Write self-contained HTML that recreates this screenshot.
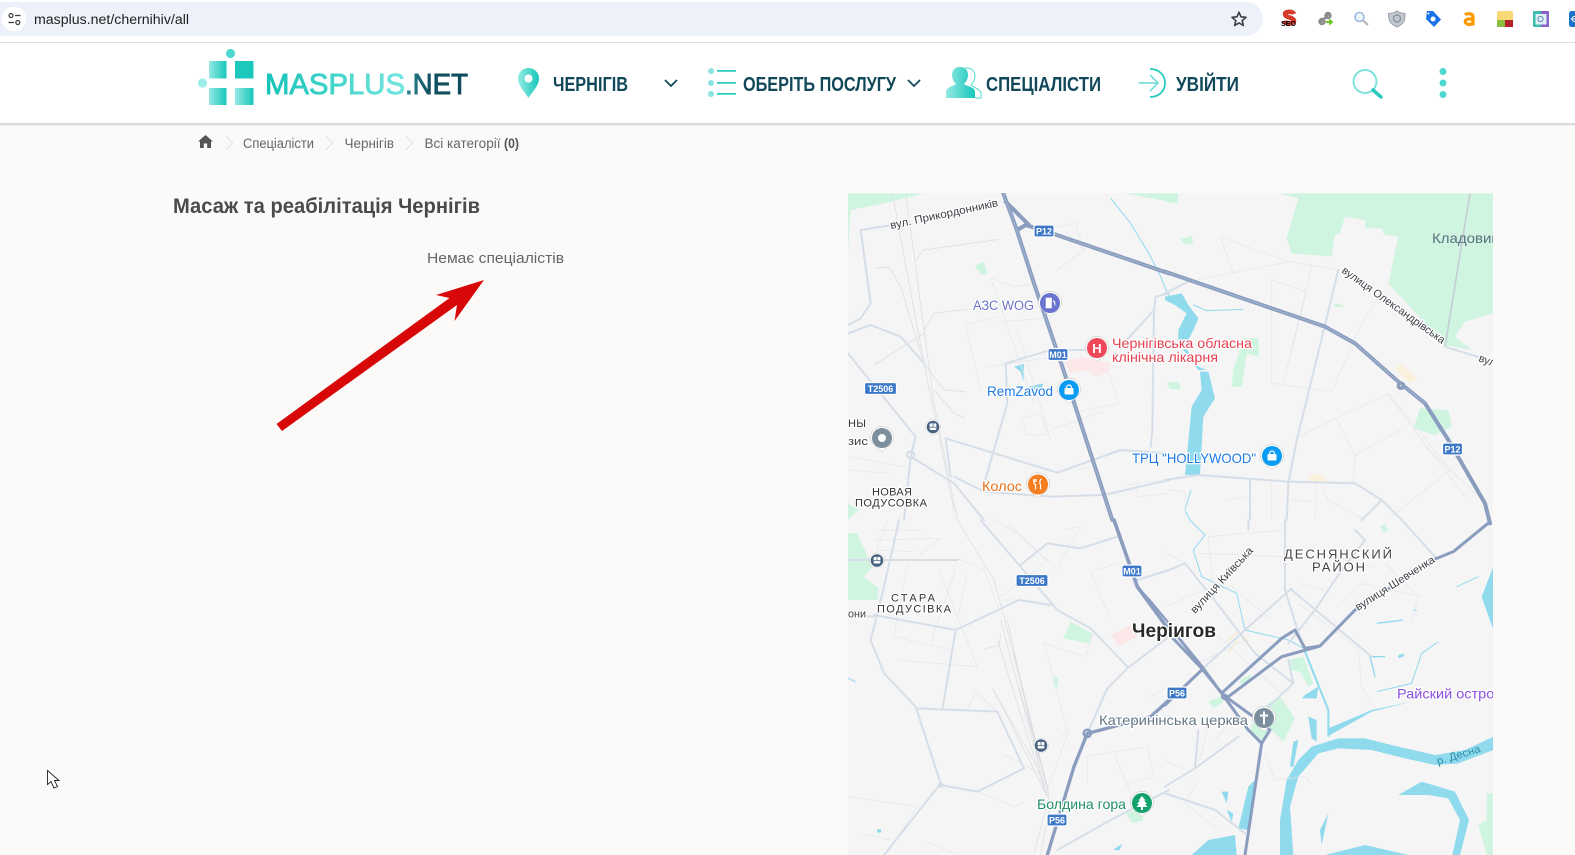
<!DOCTYPE html>
<html lang="uk"><head><meta charset="utf-8"><title>Масаж та реабілітація Чернігів</title>
<style>
html,body{margin:0;padding:0;width:1575px;height:855px;overflow:hidden;background:#fbfaf8}
svg{display:block;font-family:"Liberation Sans",sans-serif}
.h{fill:none;stroke:#8a9dbf;stroke-width:12;stroke-linejoin:round;stroke-linecap:round}
.hi{fill:none;stroke:#9fb0cc;stroke-width:3.500;stroke-linejoin:round}
.m{fill:none;stroke:#d6dee8;stroke-width:6;stroke-linejoin:round;stroke-linecap:round}
.t{fill:none;stroke:#e5e8ec;stroke-width:2.400;stroke-linejoin:round}
.r{fill:none;stroke:#dcdfe3;stroke-width:2.500}
.w{fill:#90daee}
.wl{fill:none;stroke:#90daee;stroke-width:3;stroke-linejoin:round}
.p{fill:#cff5e0}
.l{paint-order:stroke;stroke:#fff;stroke-width:2.500px;stroke-linejoin:round;font-size:14px}
.s{paint-order:stroke;stroke:#fff;stroke-width:2.500px;stroke-linejoin:round;font-size:11px;fill:#3a3f45}
.a{paint-order:stroke;stroke:#fff;stroke-width:2.500px;stroke-linejoin:round;font-size:11px;fill:#333;font-weight:bold}
.n{font-weight:bold;font-size:20px;fill:#12495a}
.sh{font-size:9px;font-weight:bold;fill:#fff;text-anchor:middle}
</style></head><body>
<svg width="1575" height="855" viewBox="0 0 1575 855" xmlns="http://www.w3.org/2000/svg">
<defs>
<linearGradient id="g" x1="0" x2="1" y1="0" y2="0"><stop offset="0" stop-color="#96eae4"/><stop offset="1" stop-color="#16c6ba"/></linearGradient>
<linearGradient id="tx" gradientUnits="userSpaceOnUse" x1="265" x2="405" y1="0" y2="0"><stop offset="0" stop-color="#16c3b8"/><stop offset="1" stop-color="#74e6df"/></linearGradient>
<linearGradient id="nt" gradientUnits="userSpaceOnUse" x1="405" x2="468" y1="0" y2="0"><stop offset="0" stop-color="#2f8a96"/><stop offset=".4" stop-color="#0f5160"/><stop offset="1" stop-color="#0f4c5c"/></linearGradient>
<clipPath id="mc"><rect x="848" y="193" width="645" height="662"/></clipPath>
<path id="pin" d="M-11.700,0A11.700,11.700 0 1 1 11.700,0C11.700,5 5,9 0,13.500C-5,9 -11.700,5 -11.700,0Z" fill="#fff" stroke="#bcbcbc" stroke-width=".5"/>
<g id="sh12"><rect x="-10" y="-6" width="20" height="12" rx="2" fill="#3d78c8" stroke="#fff" stroke-width="1.200"/></g>
<g id="sh32"><rect x="-16" y="-6" width="32" height="12" rx="2" fill="#3d78c8" stroke="#fff" stroke-width="1.200"/></g>
<g id="tr"><circle r="7.500" fill="#fff" stroke="#ccc" stroke-width=".5"/><circle r="6.300" fill="#47627e"/><rect x="-3.400" y="-3.600" width="6.800" height="6.600" rx="1.400" fill="#fff"/><rect x="-.4" y="-3.600" width=".8" height="3.400" fill="#47627e"/><rect x="-3.400" y="-.2" width="6.800" height=".8" fill="#47627e"/></g>
</defs>

<rect width="1575" height="855" fill="#fbfaf8"/>

<!-- browser chrome -->
<rect width="1575" height="42" fill="#fff"/>
<rect x="-20" y="2" width="1283" height="34" rx="17" fill="#edf1f9"/>
<circle cx="14" cy="19" r="12.300" fill="#fff"/>
<g fill="none" stroke="#3b3f45" stroke-width="1.200"><circle cx="11" cy="15.500" r="2"/><path d="M15 15.500h5.500M8.500 22.500H14"/><circle cx="17.800" cy="22.500" r="2"/></g>
<text x="34" y="24" font-size="13.500" fill="#1f1f1f" textLength="155" lengthAdjust="spacingAndGlyphs">masplus.net/chernihiv/all</text>
<path d="M1239 12.200l2 4.600 5 .5-3.800 3.300 1.100 4.900-4.300-2.600-4.300 2.600 1.100-4.900-3.800-3.300 5-.5z" fill="none" stroke="#3b3f45" stroke-width="1.600" stroke-linejoin="round"/>
<rect y="42" width="1575" height="1" fill="#e0e0e0"/>

<!-- extensions -->
<path d="M1294 14c-1-3-9-3-9 0 0 4 9 3 9 7 0 3-9 3-10 0" fill="none" stroke="#d63a2a" stroke-width="4.500"/>
<text x="1288.500" y="26" font-size="7" font-weight="bold" fill="#000" text-anchor="middle" textLength="15" lengthAdjust="spacingAndGlyphs">SEO</text>
<g fill="none" stroke="#8d8d8d" stroke-width="2.500"><path d="M1320 23l9-9"/><circle cx="1322" cy="21.500" r="2.500"/><circle cx="1328" cy="15.500" r="2.500"/></g><path d="M1326 21h3v-2.500l4.500 3.500-4.500 3.500V23h-3z" fill="#6cc326"/>
<circle cx="1359.500" cy="17" r="4.500" fill="#eef4fb" stroke="#9dbce0" stroke-width="1.600"/><path d="M1363 20.500l5 4.500" stroke="#b8b8b8" stroke-width="2.200"/>
<path d="M1388.500 13.500c3 0 6-1 8.500-2.500 2.500 1.500 5 2.500 8 2.500 0 6 0 10-8 13.500-8-3.500-8.500-7.500-8.500-13.500z" fill="#c3c8d0" stroke="#9aa0aa"/><circle cx="1397" cy="18.500" r="3.500" fill="none" stroke="#8e949e" stroke-width="1.500"/>
<path d="M1427 11h6l8 8.500-7 7.500-8-8z" fill="#1a73e8"/><circle cx="1433" cy="19" r="2.500" fill="#fff"/><circle cx="1428.500" cy="13.500" r="1" fill="#fff"/>
<path d="M1465 14.800c1.500-1.300 8-2.300 8 2.200v8.500M1473 19h-4c-5 0-5 5 0 5.500 2 0 4-1 4-3" fill="none" stroke="#ff9900" stroke-width="3.200"/>
<rect x="1497" y="11" width="16" height="16" rx="1.500" fill="#f9d976"/><rect x="1497" y="20" width="8" height="7" fill="#8bbf3f"/><rect x="1505" y="20" width="8" height="7" fill="#b3202a"/>
<rect x="1533" y="11" width="16" height="16" rx="1" fill="#3dbdb0"/><rect x="1541" y="11" width="8" height="16" fill="#8b62c9"/><rect x="1535.500" y="14" width="11" height="10.500" fill="#dff1f3"/><circle cx="1540.500" cy="19" r="2.600" fill="none" stroke="#5a88c0"/>
<rect x="1569" y="11" width="12" height="16" rx="2.500" fill="#1a73c8"/><path d="M1571 19h4" stroke="#fff"/><circle cx="1574.500" cy="19" r="2.500" fill="none" stroke="#fff"/>

<!-- site header -->
<rect y="43" width="1575" height="80" fill="#fff"/>
<rect y="123" width="1575" height="2" fill="#dcdcdc"/>
<rect y="125" width="1575" height="1" fill="#efeeec"/>
<circle cx="230.500" cy="53.500" r="4.600" fill="#4fd8d0"/>
<circle cx="202.500" cy="83" r="4.600" fill="#9ceee9"/>
<rect x="209" y="61" width="17.500" height="17.500" fill="url(#g)"/>
<rect x="235" y="61" width="18.500" height="17.500" fill="#1cc8bc"/>
<rect x="209" y="88" width="17.500" height="17" fill="url(#g)"/>
<rect x="235" y="88" width="18.500" height="17" fill="url(#g)"/>
<text x="265" y="94" font-size="29" fill="url(#tx)" textLength="140" lengthAdjust="spacingAndGlyphs" stroke="url(#tx)" stroke-width=".9">MASPLUS</text>
<text x="405" y="94" font-size="29" fill="url(#nt)" textLength="63" lengthAdjust="spacingAndGlyphs" stroke="url(#nt)" stroke-width=".9">.NET</text>

<path fill-rule="evenodd" d="M528.500 68c6 0 10.500 4.700 10.500 10.500 0 7-6.500 13-10.500 19.500-4-6.500-10.500-12.500-10.500-19.500C518 72.700 522.500 68 528.500 68zM528.500 74.500a4 4 0 1 0 0 8a4 4 0 1 0 0-8z" fill="url(#g)"/>
<text x="553" y="91" class="n" textLength="75" lengthAdjust="spacingAndGlyphs">ЧЕРНІГІВ</text>
<path d="M665 80l6 6 6-6" fill="none" stroke="#12495a" stroke-width="1.800"/>

<g fill="#8ce4de"><circle cx="711" cy="71" r="3"/><circle cx="711" cy="83" r="3"/><circle cx="711" cy="94" r="3"/></g>
<g><rect x="717" y="70" width="19" height="1.800" fill="#2fcfc4"/><rect x="717" y="82" width="19" height="1.800" fill="#2fcfc4"/><rect x="717" y="93" width="19" height="1.800" fill="#2fcfc4"/></g>
<text x="743" y="91" class="n" textLength="153" lengthAdjust="spacingAndGlyphs">ОБЕРІТЬ ПОСЛУГУ</text>
<path d="M908 80l6 6 6-6" fill="none" stroke="#12495a" stroke-width="1.800"/>

<path d="M946 98v-6c0-5 8-6 10-8-2-2-4-5-4-9 0-5 3-8 8-8s8 3 8 8c0 4-2 7-4 9 2 2 11 3 11 8v6z" fill="url(#g)"/>
<path d="M965 68c6-1 10 3 10 8 0 4-2 7-4 9 2 2 9 4 10 8v5h-6" fill="none" stroke="#4fd8d0" stroke-width="1"/>
<text x="986" y="91" class="n" textLength="115" lengthAdjust="spacingAndGlyphs">СПЕЦІАЛІСТИ</text>

<path d="M1138.500 83h18M1150 75l8 8-8 8" fill="none" stroke="#62dcd4" stroke-width="1.500"/>
<path d="M1150 69c9 0 15 6 15 14s-6 14-15 14" fill="none" stroke="#24cbbf" stroke-width="1.800"/>
<text x="1176" y="91" class="n" textLength="63" lengthAdjust="spacingAndGlyphs">УВІЙТИ</text>

<circle cx="1365" cy="81.500" r="11.500" fill="none" stroke="#7fe2dc" stroke-width="2"/>
<path d="M1373 90l8 7" stroke="#2ec8bd" stroke-width="3.500" stroke-linecap="round"/>
<g fill="#4fd8d0"><circle cx="1443" cy="71.500" r="3.500"/><circle cx="1443" cy="83" r="3.500"/><circle cx="1443" cy="94.500" r="3.500"/></g>

<!-- breadcrumbs -->
<path d="M205.500 135l7.500 6.500h-2v6.500h-3.800v-4.500h-3.400v4.500H200v-6.500h-2z" fill="#555"/>
<g fill="none" stroke="#e2e2e0" stroke-width="1"><path d="M226 136l6.500 7-6.500 7"/><path d="M326 136l6.500 7-6.500 7"/><path d="M406 136l6.500 7-6.500 7"/></g>
<g font-size="13.500" fill="#666"><text x="243" y="148" textLength="71" lengthAdjust="spacingAndGlyphs">Спеціалісти</text><text x="344.500" y="148" textLength="49.500" lengthAdjust="spacingAndGlyphs">Чернігів</text><text x="424.500" y="148" textLength="76" lengthAdjust="spacingAndGlyphs">Всі категорії</text><text x="504" y="148" font-weight="bold" fill="#555" textLength="15" lengthAdjust="spacingAndGlyphs">(0)</text></g>

<!-- content -->
<text x="173" y="213" font-size="21" font-weight="bold" fill="#4a4a4a" textLength="307" lengthAdjust="spacingAndGlyphs">Масаж та реабілітація Чернігів</text>
<text x="427" y="263" font-size="14.500" fill="#666" textLength="137" lengthAdjust="spacingAndGlyphs">Немає спеціалістів</text>
<path d="M484 280L436 295 449.500 298 276.500 424 282 431 457 305 454.500 321z" fill="#d80808"/>
<path d="M47.500 770.500v14l3.500-3 3 6.500 3.500-1.500-3-6h4.500z" fill="#fff" stroke="#222" stroke-width=".9"/>

<!-- map -->
<g clip-path="url(#mc)">
<rect x="848" y="193" width="645" height="662" fill="#f5f5f6"/>

<!-- z4 -->
<g transform="translate(844 190) scale(.33333)">
<path class="p" d="M12 10H240L120 40 20 60 12 180z"/><path class="p" d="M840 10L975 35V10z"/><path class="p" d="M392 228L420 215 430 250 412 255z"/><path class="p" d="M12 940L45 960 12 990z"/>
<path fill="#fce8e8" d="M660 515L710 500 800 520 795 545 760 560 725 540 680 550z"/>
<path class="w" d="M510 530L540 522 538 575 530 545zM555 590L598 580 590 610 570 600z"/>
<path class="wl" d="M800 25L860 100 920 200 950 260 975 320"/>
<g><path class="r" d="M145 10L240 520 330 960M185 10L270 640 340 990"/><path class="r" d="M215 210L240 180 465 148M240 420L270 370 370 358M95 235L135 230 170 290 240 520M90 525L240 430M240 520L300 600 365 605M270 600L330 670 365 685"/></g>
<g><path class="t" d="M440 265L510 290 575 280M440 265L570 640M365 405L410 600M365 405L460 380M520 420L620 750M530 685L590 670 610 735 550 735zM700 840L745 830M620 720L775 665M460 395L610 385M430 530L640 500M660 120L720 180 640 240M640 110L695 100 720 180M795 550L825 640 700 665M845 885L975 870M880 870L880 920 975 910"/></g>
<path class="m" d="M50 120L145 105M50 120L80 340 50 385 12 405M12 490L215 740 200 800 330 880 420 990M200 800L180 990M305 745L320 860M305 745L640 848 830 780 975 790M415 900L490 640 485 520 620 480 730 480M330 860L420 905 620 920 780 915 975 870M830 470L930 360 935 320 975 310M930 360L925 720 920 770M12 430L80 405 170 440 240 520"/>
<circle cx="200" cy="795" r="11" fill="none" stroke="#d4dde7" stroke-width="6"/>
<path class="t" d="M20 800L180 830M12 840L140 850"/>
<path class="h" d="M478 10L515 110 570 280 655 530 805 990"/><path class="h" d="M520 120L545 105 600 122 975 250M485 35L555 105"/><path class="hi" d="M478 10L515 110 570 280 655 530 805 990M600 122L975 250"/>
</g>

<!-- z5 -->
<g transform="translate(1165 190) scale(.33333)">
<path class="p" d="M340 10L400 25 365 145 380 190 500 200 510 135 525 130 540 80 600 90 600 115 650 115 660 135 700 140 670 280 840 465 920 480 870 440 900 395 985 370V10z"/>
<path class="p" d="M0 10H40L38 40 0 35zM45 148L80 138 85 160 60 165zM235 445L280 445 282 500 245 490 230 590 200 590 205 540 225 480zM5 578L40 575 48 597 15 597zM505 340L535 345 535 352 508 350zM765 655L850 660 860 710 810 735 745 715z"/>
<path fill="#f9f1dc" d="M690 535L710 522 755 565 735 580zM432 855L465 852 490 875 435 875z"/>
<path class="w" d="M0 320L50 310 70 345 100 385 85 420 60 470 100 530 125 540 100 540 40 460 40 420 65 370 30 345 0 330zM105 545L130 545 150 625 115 680 105 855 60 855 80 650 110 600z"/>
<path class="wl" d="M85 345L125 362 235 358M78 900L60 960 75 990"/>
<path class="t" d="M165 140L372 215 525 240M165 140L205 250M70 275L372 215M320 270L425 305 355 580M320 270L320 580 500 605 585 410 640 320M320 580L500 605M440 230L355 580M400 740L670 610 850 830M515 690L570 795 715 715M570 795L565 880M665 610L900 920M780 770L975 950M680 980L880 820M0 900L60 905 60 990M185 930L255 920M320 880L320 990M455 885L450 990M375 930L450 935M470 885L490 930 600 990"/>
<path class="m" d="M0 870L100 855 370 875 570 880 650 930 710 990M520 240L430 610 395 750 370 880 365 990M255 870L255 990M650 930L590 990M0 310L70 275"/>
<path fill="none" stroke="#c8cdd4" stroke-width="5" d="M915 10L840 470"/>
<path class="m" d="M840 470L985 515"/>
<path class="h" d="M0 245L480 410 570 460 700 575 780 640 850 750 960 940 975 1000"/>
<path class="hi" d="M0 245L480 410 570 460 700 575 780 640"/>
<circle cx="708" cy="587" r="13" fill="#8a9dbf"/><circle cx="708" cy="587" r="3" fill="#c5cfe0"/>
</g>

<!-- z6 -->
<g transform="translate(844 520) scale(.33333)">
<path class="p" d="M12 40H40L85 140 60 170 105 205 100 240H12zM680 305L745 340 735 370 658 355zM628 472H642V500H628zM845 880L880 870 900 900 865 910z"/>
<path fill="#fce8e8" d="M800 345L870 310 880 350 825 380z"/>
<path class="w" d="M98 928L112 928 110 938 100 938zM808 988L835 972 825 992z"/><path class="wl" d="M12 475L35 485"/>
<path class="t" d="M95 30L240 30M90 60L290 55 220 110M100 90L210 95M130 0L95 100M190 130L150 350 340 395M280 140L400 440 160 420M335 145L260 370M370 160L340 300M600 370L725 410 750 330M600 370L670 630M740 155L820 130 880 210M740 155L800 300M470 240L525 240M470 230L600 130M450 0L520 40 640 150M490 10L620 130M660 30L710 20 640 140M720 710L910 680 930 770 850 790M730 710L730 790M810 700L860 820M12 830L220 860 130 1000M50 940L140 960M245 965L340 1005M470 700L590 760M400 815L510 860 540 845M370 570L395 515 460 575M650 650L675 630 610 810M950 560L975 610M920 530L970 500"/>
<path d="M480 290L615 830M470 300L610 830M460 360L605 820M490 300L600 800M510 400L610 800M525 500L615 820M450 510L610 830M445 505L590 760M420 388L470 375M470 340L465 380M340 0L450 180 480 290M615 830L570 1000M620 850L590 1005" fill="none" stroke="#d9dbdf" stroke-width="2"/>
<path class="m" d="M165 0L120 200 80 360 120 460 215 560 290 790 120 1005M410 0L640 270 740 325 850 440M90 285L335 330 525 240 620 255M335 330L295 570M220 565L460 575 540 745 400 815 290 795M530 135L610 70 710 85 820 50M975 350L850 445 790 505 730 640M975 810L800 900 640 990M12 285L90 290M12 120H340"/>
<path class="t" d="M340 115L420 150 470 280"/>
<path class="m" d="M880 180L975 150"/>
<circle cx="290" cy="795" r="8" fill="#d4dde7"/>
<path class="h" style="stroke-width:11" d="M810 0L880 200 975 330"/>
<path class="h" style="stroke-width:7" d="M880 200L925 250 975 310"/>
<path class="h" style="stroke-width:10" d="M975 540L920 590 770 630 730 640 690 740 610 1005"/>
<circle cx="730" cy="640" r="11" fill="none" stroke="#8a9dbf" stroke-width="7"/>
</g>

<!-- z7 -->
<g transform="translate(1165 520) scale(.33333)">
<path class="p" d="M370 420L415 410 445 490 430 500 405 455 375 450zM310 550L345 530 390 595 355 665 320 630 290 660 255 630 270 590zM130 545L165 530 175 545 145 565zM225 480L260 460 245 495 230 500zM645 20L660 12 670 30 655 38zM965 820L985 820V1005H965L940 915 965 900z"/>
<path fill="none" stroke="#f7ecd2" stroke-width="5" d="M185 365L220 335 250 365M190 395L220 360"/>
<path class="w" d="M400 720L440 680 520 655 600 655 700 680 810 705 900 690 985 650V690L880 730 810 735 720 715 620 690 520 685 460 700 400 770 375 860 385 1005H345L345 900 365 780zM490 625L620 570 740 545 620 575 490 648zM420 525L460 500 455 535 410 535zM430 590L455 600 455 665 440 655zM385 665L400 660 385 740 375 740zM985 140L950 230 985 330zM170 815L190 815 185 850zM185 870L205 880 200 905zM250 800L270 780 250 930 220 925zM130 960L210 945 215 1005H80zM700 825L770 785 870 815 912 900 885 1005H862L885 900 850 835 790 825zM490 880L465 930 470 975zM480 1005L600 975 730 1005zM700 405L718 400 715 410 700 415z"/>
<path class="wl" style="stroke-width:6" d="M420 395L490 570 490 650"/>
<path class="wl" d="M75 0L120 45 85 90 110 170 215 220 240 330 370 360 415 385M635 515L740 490 770 400 820 365M875 200L940 170"/>
<path class="wl" style="stroke-width:4" d="M635 310L715 300M660 410L615 410 630 470M745 270L755 272"/>
<path class="t" d="M130 50L240 40M130 50L150 250M250 40L360 30M0 95L60 130M100 100L360 110M200 200L320 300M0 260L140 200M400 250L560 370M580 390L590 500 620 550M560 370L580 390M520 260L590 190 770 230M460 100L620 140M660 130L760 230 740 300M400 190L480 210M140 330L350 520M100 430L240 360M200 600L150 660M100 780L60 850 160 930M300 700L330 780 420 770M0 720L60 750M130 620L100 730M420 770L435 790"/>
<path class="m" d="M0 155L60 130 160 255 270 400 385 490 310 560M250 0V30M360 0V210L415 385M380 205L240 330 120 440M380 210L620 410M570 30L600 60 530 150 450 270 370 370M710 0L810 110M0 820L150 870 240 940M0 800L90 745 220 650M100 630L90 745M370 420L385 490"/>
<path class="h" style="stroke-width:9" d="M975 5L865 95 815 115 570 270 465 378 350 410 190 530M390 330L420 385 465 378M390 330L350 355 175 515M0 330L110 445 175 525 265 590 315 630 290 670 240 1005M30 340L115 445 250 630 290 670M0 555L110 450"/>
<circle cx="178" cy="530" r="7" fill="none" stroke="#8a9dbf" stroke-width="6"/>
</g>

<!-- shields -->
<g><use href="#sh12" x="1044" y="231"/><text class="sh" x="1044" y="234.500">P12</text>
<use href="#sh12" x="1058" y="354.500"/><text class="sh" x="1058" y="358">M01</text>
<use href="#sh12" x="1452.500" y="449"/><text class="sh" x="1452.500" y="452.500">P12</text>
<use href="#sh12" x="1132" y="571"/><text class="sh" x="1132" y="574.500">M01</text>
<use href="#sh12" x="1177" y="693"/><text class="sh" x="1177" y="696.500">P56</text>
<use href="#sh12" x="1057" y="820"/><text class="sh" x="1057" y="823.500">P56</text>
<use href="#sh32" x="880.500" y="388.500"/><text class="sh" x="880.500" y="392">T2506</text>
<use href="#sh32" x="1032" y="580.500"/><text class="sh" x="1032" y="584">T2506</text></g>

<use href="#tr" x="933" y="427"/><use href="#tr" x="877" y="560.500"/><use href="#tr" x="1041" y="745.500"/>

<!-- pins -->
<use href="#pin" x="1050" y="303"/><circle cx="1050" cy="303" r="10" fill="#6874d0"/><path d="M1046 298h5.500v10h-5.500zM1053 300l2 2v4" fill="#fff" stroke="#fff" stroke-width=".6"/>
<use href="#pin" x="1097" y="348"/><circle cx="1097" cy="348" r="10" fill="#f0475a"/><text x="1097" y="353" font-size="13" font-weight="bold" fill="#fff" text-anchor="middle">H</text>
<use href="#pin" x="1069" y="390"/><circle cx="1069" cy="390" r="10" fill="#0a9bf5"/><rect x="1064.500" y="388" width="9" height="6.500" rx="1" fill="#fff"/><path d="M1066.500 388c0-4 5-4 5 0" fill="none" stroke="#fff" stroke-width="1.200"/>
<use href="#pin" x="1272" y="456"/><circle cx="1272" cy="456" r="10" fill="#0a9bf5"/><rect x="1267.500" y="454" width="9" height="6.500" rx="1" fill="#fff"/><path d="M1269.500 454c0-4 5-4 5 0" fill="none" stroke="#fff" stroke-width="1.200"/>
<use href="#pin" x="1038" y="484.500"/><circle cx="1038" cy="484.500" r="10" fill="#f57f20"/><path d="M1034 479v3.500c0 1.500 1 2 1.500 2v5M1036 479v3M1034.500 479v3M1041.500 479c-2 1-2 4-1 6v4.500" fill="none" stroke="#fff" stroke-width="1.200"/>
<use href="#pin" x="882" y="438"/><circle cx="882" cy="438" r="10" fill="#7b8f9c"/><circle cx="882" cy="438" r="4" fill="#fff"/>
<use href="#pin" x="1264" y="718"/><circle cx="1264" cy="718" r="10" fill="#7b8f9c"/><path d="M1264 711.500v13M1260 715.500h8" stroke="#fff" stroke-width="2"/>
<use href="#pin" x="1142" y="803"/><circle cx="1142" cy="803" r="10" fill="#12a36c"/><path d="M1142 796l3.500 4.500h-1.500l3 3.500h-2l2.500 3h-11l2.500-3h-2l3-3.500h-1.500zM1141 807h2v3h-2z" fill="#fff"/>

<!-- labels -->
<text class="s" transform="translate(891 229) rotate(-12)" textLength="110" lengthAdjust="spacingAndGlyphs">вул. Прикордонників</text>
<text class="l" x="973" y="310" fill="#6b73c9" textLength="61" lengthAdjust="spacingAndGlyphs">АЗС WOG</text>
<text class="l" x="1112" y="348" fill="#e5404f" textLength="140" lengthAdjust="spacingAndGlyphs">Чернігівська обласна</text>
<text class="l" x="1112" y="362" fill="#e5404f" textLength="106" lengthAdjust="spacingAndGlyphs">клінічна лікарня</text>
<text class="l" x="987" y="396" fill="#1a7ae8" textLength="66" lengthAdjust="spacingAndGlyphs">RemZavod</text>
<text class="l" x="982" y="491" fill="#e8701a" textLength="40" lengthAdjust="spacingAndGlyphs">Колос</text>
<text class="l" x="1132" y="463" fill="#1a7ae8" textLength="124" lengthAdjust="spacingAndGlyphs">ТРЦ "HOLLYWOOD"</text>
<text class="a" x="848" y="427" style="font-weight:normal" textLength="18">НЫ</text>
<text class="s" x="848" y="445" textLength="20" lengthAdjust="spacingAndGlyphs">зис</text>
<text class="a" x="872" y="495.500" textLength="40" style="font-weight:normal">НОВАЯ</text>
<text class="a" x="855" y="506.500" textLength="72" style="font-weight:normal">ПОДУСОВКА</text>
<text class="a" x="891" y="601.500" textLength="44" style="font-weight:normal">СТАРА</text>
<text class="a" x="877" y="612.500" textLength="74" style="font-weight:normal">ПОДУСІВКА</text>
<text class="s" x="848" y="617.500" textLength="18" lengthAdjust="spacingAndGlyphs">они</text>
<text x="1432" y="243" font-size="14" fill="#5c7080" textLength="80" lengthAdjust="spacingAndGlyphs">Кладовище</text>
<text class="s" transform="translate(1341 272) rotate(35.500)" textLength="124" lengthAdjust="spacingAndGlyphs">вулиця Олександрівська</text>
<text class="s" transform="translate(1478 361) rotate(20)">вул</text>
<text x="1132" y="637" font-size="19" font-weight="bold" fill="#2a2a2a" stroke="#fff" stroke-width="2.500" paint-order="stroke" textLength="84" lengthAdjust="spacingAndGlyphs">Черіигов</text>
<text x="1284" y="558.500" font-size="13" fill="#444" stroke="#fff" stroke-width="2.500" paint-order="stroke" textLength="108">ДЕСНЯНСКИЙ</text>
<text x="1312" y="571.500" font-size="13" fill="#444" stroke="#fff" stroke-width="2.500" paint-order="stroke" textLength="53">РАЙОН</text>
<text class="s" transform="translate(1195 614) rotate(-47)" textLength="86" lengthAdjust="spacingAndGlyphs">вулиця Київська</text>
<text class="s" transform="translate(1358 611) rotate(-32.500)" textLength="92" lengthAdjust="spacingAndGlyphs">вулиця Шевченка</text>
<text class="l" x="1099" y="725" fill="#647885" textLength="149" lengthAdjust="spacingAndGlyphs">Катеринінська церква</text>
<text class="l" x="1397" y="698.500" fill="#8b4fe0" textLength="105" lengthAdjust="spacingAndGlyphs">Райский остров</text>
<text transform="translate(1438 765) rotate(-17)" font-size="11" fill="#2d8fa8" textLength="45" lengthAdjust="spacingAndGlyphs">р. Десна</text>
<text class="l" x="1037" y="809" fill="#1f8f65" textLength="89" lengthAdjust="spacingAndGlyphs">Болдина гора</text>
</g>
</svg>
</body></html>
